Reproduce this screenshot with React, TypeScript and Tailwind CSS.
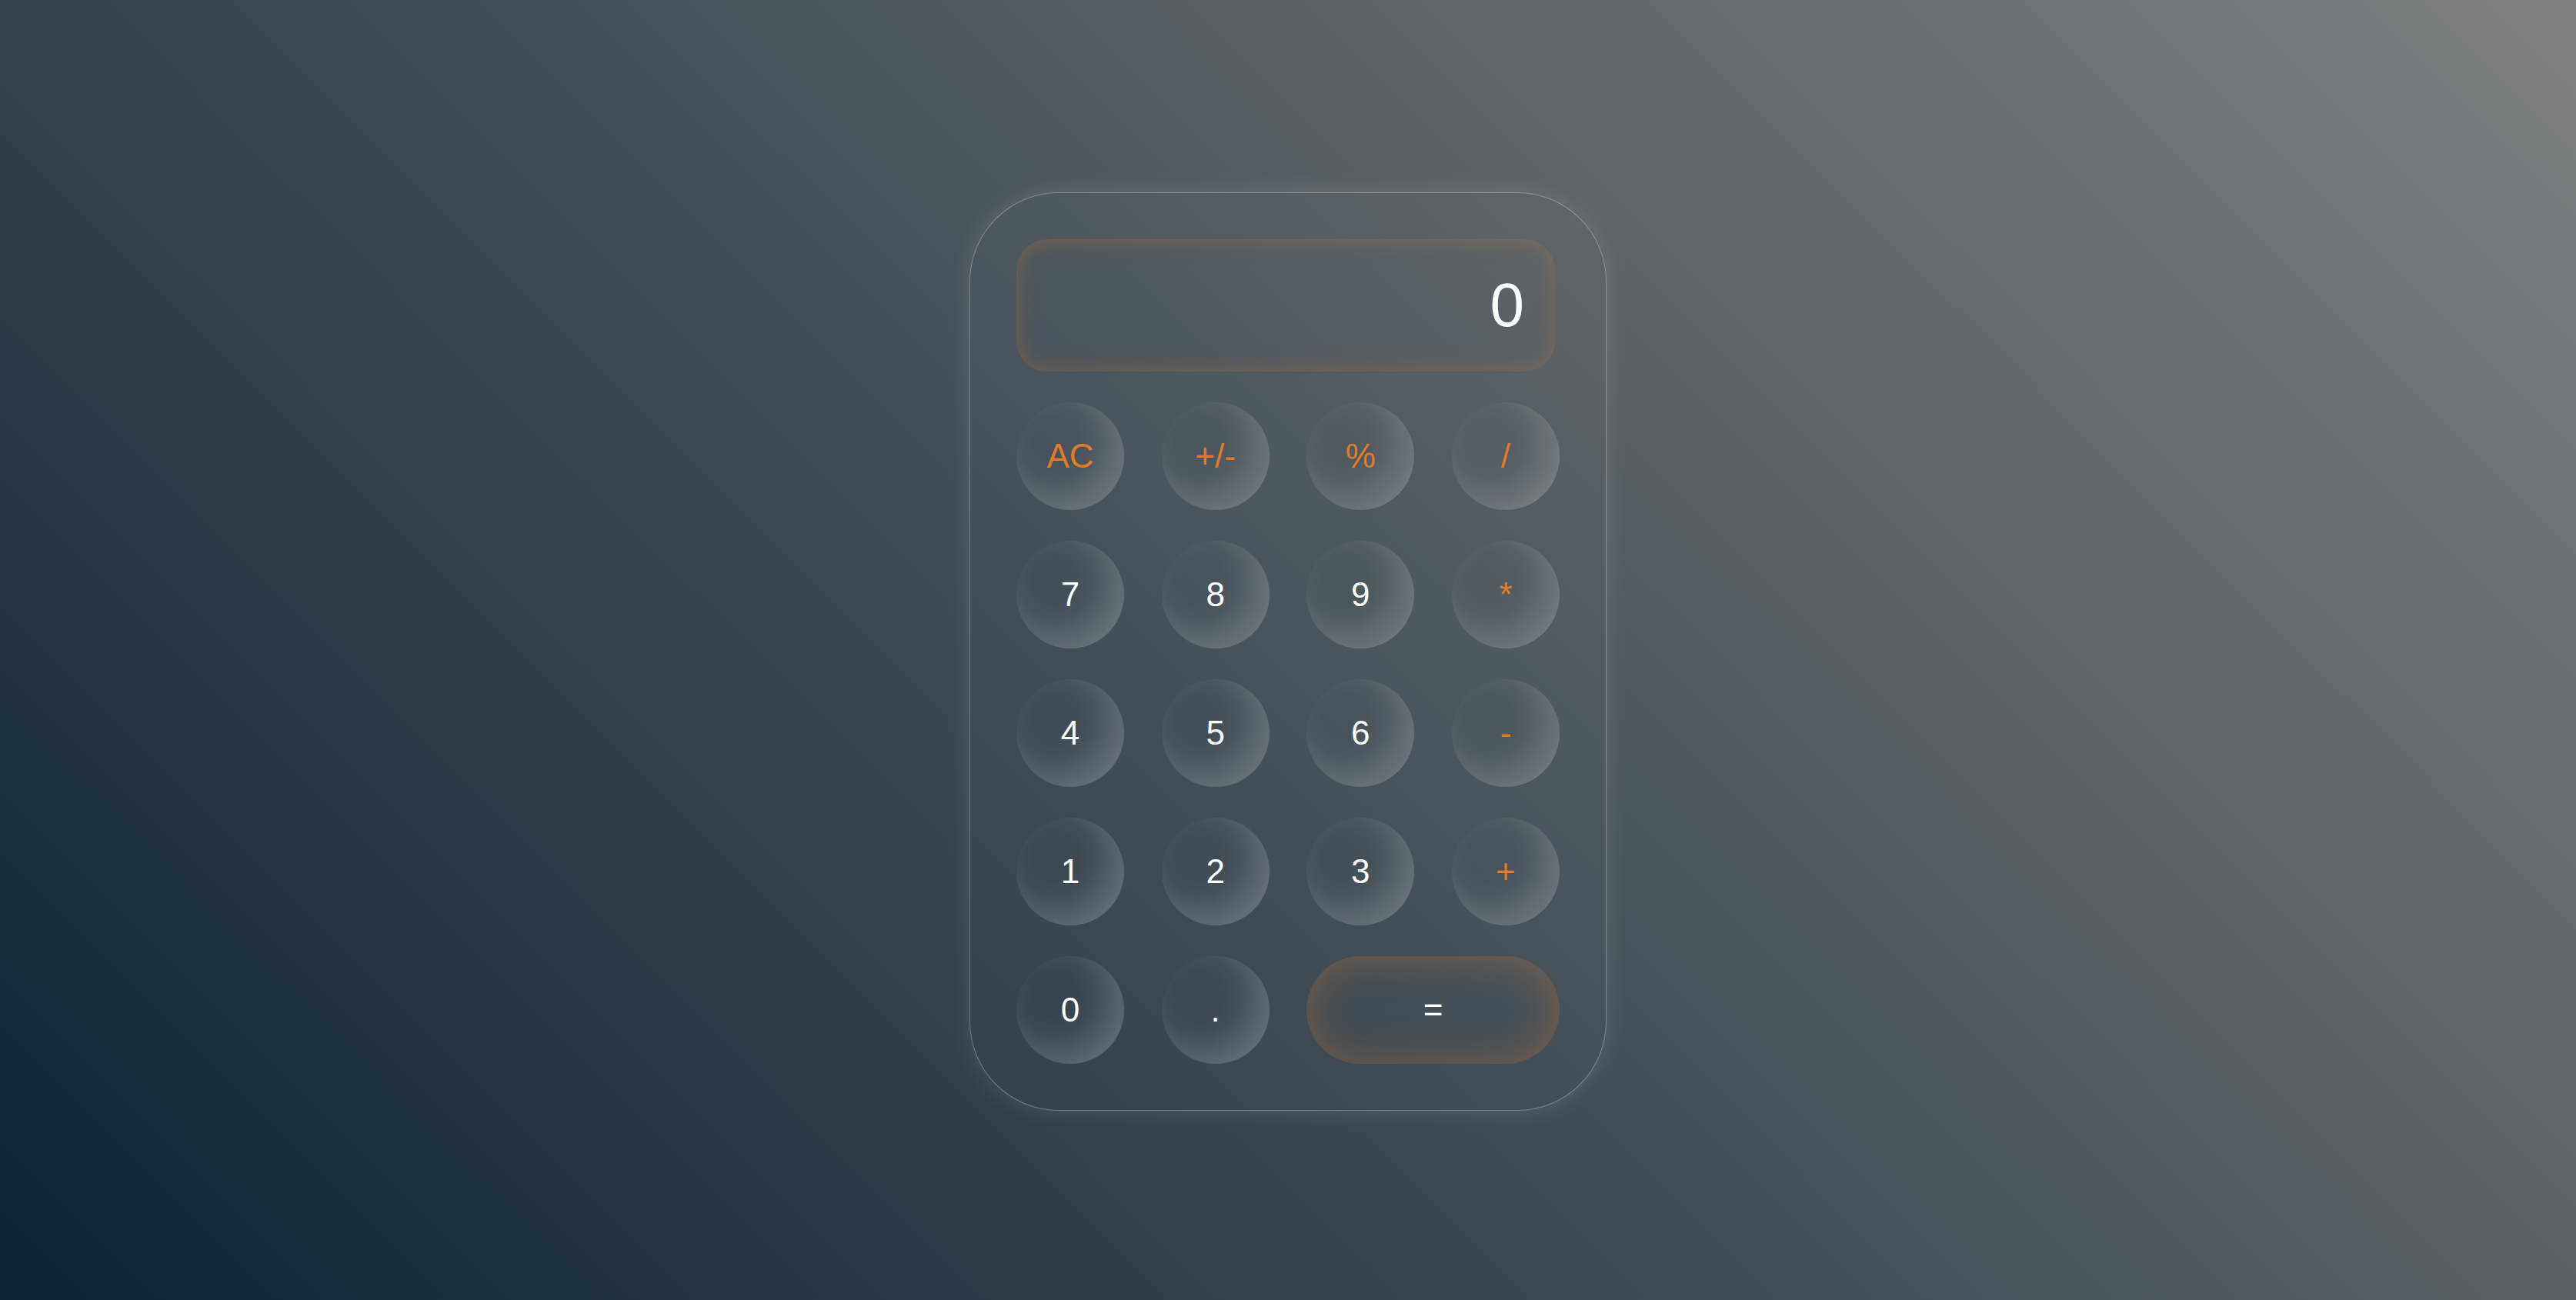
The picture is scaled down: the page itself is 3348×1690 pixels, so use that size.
import React from "react";

type Key = { label: string; op?: boolean; wide?: boolean };

const keys: Key[] = [
  { label: "AC", op: true },
  { label: "+/-", op: true },
  { label: "%", op: true },
  { label: "/", op: true },
  { label: "7" },
  { label: "8" },
  { label: "9" },
  { label: "*", op: true },
  { label: "4" },
  { label: "5" },
  { label: "6" },
  { label: "-", op: true },
  { label: "1" },
  { label: "2" },
  { label: "3" },
  { label: "+", op: true },
  { label: "0" },
  { label: "." },
  { label: "=", wide: true },
];

export default function App() {
  return (
    <div
      className="min-h-screen w-full pt-[4px] flex items-center justify-center bg-[linear-gradient(45deg,#0d2333,#808080)]"
      style={{ fontFamily: '"Liberation Sans", Arial, sans-serif' }}
    >
      <div className="w-[828px] rounded-[116px] border border-white/30 bg-white/[0.015] p-[60px] flex flex-col gap-10 shadow-[0_0_30px_rgba(255,255,255,0.12)]">
        <div className="w-[700px] h-[172px] rounded-[40px] flex items-center justify-end pr-[40px] text-white text-[80px] leading-none shadow-[inset_0_0_28px_rgba(224,123,44,0.3)]">
          0
        </div>
        <div className="grid grid-cols-[140px_140px_140px_140px] justify-between gap-y-10">
          {keys.map((k) =>
            k.wide ? (
              <button
                key={k.label}
                className="col-span-2 h-[140px] rounded-full flex items-center justify-center text-white text-[44px] leading-none shadow-[inset_0_0_55px_rgba(224,123,44,0.36)]"
              >
                {k.label}
              </button>
            ) : (
              <button
                key={k.label}
                className={
                  "w-[140px] h-[140px] rounded-full flex items-center justify-center text-[44px] leading-none bg-[radial-gradient(circle_at_36%_36%,rgba(255,255,255,0)_28px,rgba(255,255,255,0.03)_50px,rgba(255,255,255,0.2)_102px)] " +
                  (k.op ? "text-[#e07b2c]" : "text-white")
                }
              >
                {k.label}
              </button>
            )
          )}
        </div>
      </div>
    </div>
  );
}
